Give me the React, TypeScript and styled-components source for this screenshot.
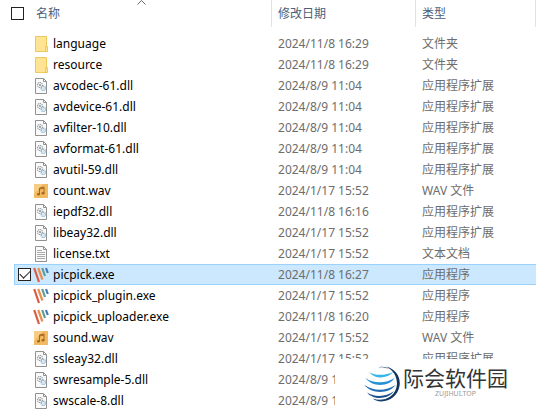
import React from "react";
import styled, { createGlobalStyle, css } from "styled-components";

const GlobalStyle = createGlobalStyle`
  * { box-sizing: border-box; }
  body {
    margin: 0;
    overflow: hidden;
    background: #fff;
    font-family: "Noto Sans", "Noto Sans CJK SC", sans-serif;
    font-size: 12px;
  }
`;

const Explorer = styled.main`
  position: relative;
  height: 100vh;
  overflow: hidden;
`;

const FileTable = styled.table`
  width: 100%;
  border-collapse: separate;
  border-spacing: 0;
  table-layout: fixed;
`;

const Col = styled.col<{ $width?: number }>`
  ${(p) => p.$width && css`width: ${p.$width}px;`}
`;

const HeadCell = styled.th`
  position: relative;
  height: 33px;
  padding: 0;
  vertical-align: top;
  font-weight: 400;
  text-align: left;
`;

const HeadInner = styled.div<{ $lead?: boolean }>`
  display: flex;
  align-items: center;
  gap: 12px;
  height: 27px;
  padding-left: ${(p) => (p.$lead ? 11 : 6)}px;
  border-right: 1px solid #e2e2e2;
`;

const HeadButton = styled.button`
  padding: 0;
  border: 0;
  background: none;
  color: #4c607a;
  font: inherit;
  line-height: 20px;
`;

const SortMark = styled.svg`
  position: absolute;
  top: 0;
  left: 137px;
  width: 9px;
  height: 5px;
`;

const CheckBox = styled.input`
  flex: none;
  appearance: none;
  display: grid;
  place-items: center;
  width: 13px;
  height: 13px;
  margin: 0;
  border: 1px solid #222;
  background: #fff;

  &:checked::after {
    content: "";
    width: 9px;
    height: 5px;
    margin-bottom: 3px;
    border: solid #222;
    border-width: 0 0 1px 1px;
    transform: rotate(-45deg);
  }
`;

const Row = styled.tr<{ $selected: boolean }>`
  ${(p) =>
    p.$selected &&
    css`
      td:not(:first-child) {
        background: #cce8ff;
        border-top: 1px solid #99d1ff;
        border-bottom: 1px solid #99d1ff;
      }
      td:nth-child(2) {
        border-left: 1px solid #99d1ff;
      }
    `}
`;

const Cell = styled.td`
  height: 21px;
  padding: 0 0 0 6px;
  color: #6d6d6d;
  line-height: 19px;
  white-space: nowrap;
`;

const NameCell = styled(Cell)<{ $selected: boolean }>`
  padding-left: ${(p) => (p.$selected ? 3 : 19)}px;
`;

const NameLabel = styled.label`
  display: flex;
  align-items: center;
  gap: 2px;
  color: #000;
`;

const FileName = styled.span`
  padding-left: 2px;
`;

const Icon = styled.svg`
  flex: none;
  width: 16px;
  height: 16px;
`;

const Watermark = styled.aside`
  position: absolute;
  right: 0;
  bottom: 0;
  display: flex;
  align-items: flex-start;
  gap: 2px;
  width: 201px;
  height: 50px;
  padding: 7px 0 0 29px;
  background: #fff;
`;

const Globe = styled.svg`
  width: 37px;
  height: 36px;
`;

const Brand = styled.div`
  display: flex;
  flex-direction: column;
  align-items: center;
`;

const BrandName = styled.strong`
  color: #333;
  font-size: 21px;
  font-weight: 400;
  line-height: 24px;
`;

const BrandSite = styled.small`
  color: #999;
  font-size: 7px;
  line-height: 8px;
`;

type Kind = "folder" | "dll" | "wav" | "txt" | "exe";

const FileIcon = ({ kind }: { kind: Kind }) => {
  if (kind === "folder")
    return (
      <Icon viewBox="0 0 16 16" aria-hidden="true">
        <path d="M2 .5h11.5v10h1.5v5H2z" fill="#ffe494" />
        <path d="M2.500.500h11v10M2.500.500v15h12v-5h-2v5" fill="none" stroke="#edc95d" />
      </Icon>
    );
  if (kind === "wav")
    return (
      <Icon viewBox="0 0 16 16" aria-hidden="true">
        <path d="M1 1h14v14H1z" fill="#f0b962" />
        <path d="M1 1h9L1 11z" fill="#f7cd86" />
        <path d="M6.500 11V5l4.500-1v6M6.500 6l4.500-1" fill="none" stroke="#a8661c" />
        <ellipse cx="5.500" cy="11.200" rx="1.500" ry="1.200" fill="#a8661c" />
        <ellipse cx="10" cy="10.200" rx="1.500" ry="1.200" fill="#a8661c" />
      </Icon>
    );
  if (kind === "exe")
    return (
      <Icon viewBox="0 0 16 16" aria-hidden="true" fill="none" strokeWidth="2.200">
        <path d="M1.200 1 6 15" stroke="#d95b43" />
        <path d="M5.200 1 9.400 12.500" stroke="#e8904e" />
        <path d="M9.200 1 12 9" stroke="#5d9c95" />
        <path d="M13 1 14.800 6" stroke="#4779b8" />
      </Icon>
    );
  return (
    <Icon viewBox="0 0 16 16" aria-hidden="true" fill="none">
      <path d="M2.500.500h8l3 3v12h-11z" fill="#fafafa" stroke="#919191" />
      <path d="M10.500.500v3h3" stroke="#919191" />
      {kind === "txt" ? (
        <path d="M4 4.500h5M4 6.500h8M4 8.500h8M4 10.500h8M4 12.500h8" stroke="#aaa" />
      ) : (
        <>
          <circle cx="7" cy="7" r="2.500" stroke="#969da2" strokeWidth="1.200" strokeDasharray="1.300 .6" />
          <circle cx="7" cy="7" r="1" fill="#8b9195" />
          <circle cx="10.300" cy="10.300" r="2.100" stroke="#8fbddb" strokeWidth="1.400" strokeDasharray="1.300 .4" />
          <circle cx="10.300" cy="10.300" r=".8" fill="#b9d8ea" />
        </>
      )}
    </Icon>
  );
};

const kindNames: Record<Kind, string> = {
  folder: "文件夹",
  dll: "应用程序扩展",
  wav: "WAV 文件",
  txt: "文本文档",
  exe: "应用程序",
};

type FileEntry = { name: string; date: string; kind: Kind; selected?: boolean; untyped?: boolean };

const files: FileEntry[] = [
  { name: "language", date: "2024/11/8 16:29", kind: "folder" },
  { name: "resource", date: "2024/11/8 16:29", kind: "folder" },
  { name: "avcodec-61.dll", date: "2024/8/9 11:04", kind: "dll" },
  { name: "avdevice-61.dll", date: "2024/8/9 11:04", kind: "dll" },
  { name: "avfilter-10.dll", date: "2024/8/9 11:04", kind: "dll" },
  { name: "avformat-61.dll", date: "2024/8/9 11:04", kind: "dll" },
  { name: "avutil-59.dll", date: "2024/8/9 11:04", kind: "dll" },
  { name: "count.wav", date: "2024/1/17 15:52", kind: "wav" },
  { name: "iepdf32.dll", date: "2024/11/8 16:16", kind: "dll" },
  { name: "libeay32.dll", date: "2024/1/17 15:52", kind: "dll" },
  { name: "license.txt", date: "2024/1/17 15:52", kind: "txt" },
  { name: "picpick.exe", date: "2024/11/8 16:27", kind: "exe", selected: true },
  { name: "picpick_plugin.exe", date: "2024/1/17 15:52", kind: "exe" },
  { name: "picpick_uploader.exe", date: "2024/11/8 16:20", kind: "exe" },
  { name: "sound.wav", date: "2024/1/17 15:52", kind: "wav" },
  { name: "ssleay32.dll", date: "2024/1/17 15:52", kind: "dll" },
  { name: "swresample-5.dll", date: "2024/8/9 11:04", kind: "dll", untyped: true },
  { name: "swscale-8.dll", date: "2024/8/9 11:04", kind: "dll", untyped: true },
];

export default function App() {
  return (
    <Explorer>
      <GlobalStyle />
      <FileTable>
        <colgroup>
          <Col $width={14} />
          <Col $width={258} />
          <Col $width={144} />
          <Col />
        </colgroup>
        <thead>
          <tr>
            <HeadCell colSpan={2}>
              <HeadInner $lead>
                <CheckBox type="checkbox" aria-label="全选" />
                <HeadButton type="button">名称</HeadButton>
              </HeadInner>
              <SortMark viewBox="0 0 9 5" aria-hidden="true">
                <path d="M.5 4.500 4.500.500l4 4" fill="none" stroke="#666" />
              </SortMark>
            </HeadCell>
            <HeadCell>
              <HeadInner>
                <HeadButton type="button">修改日期</HeadButton>
              </HeadInner>
            </HeadCell>
            <HeadCell>
              <HeadInner>
                <HeadButton type="button">类型</HeadButton>
              </HeadInner>
            </HeadCell>
          </tr>
        </thead>
        <tbody>
          {files.map(({ name, date, kind, selected = false, untyped }) => (
            <Row key={name} $selected={selected}>
              <Cell />
              <NameCell $selected={selected}>
                <NameLabel>
                  {selected && <CheckBox type="checkbox" defaultChecked />}
                  <FileIcon kind={kind} />
                  <FileName>{name}</FileName>
                </NameLabel>
              </NameCell>
              <Cell>{date}</Cell>
              <Cell>{untyped ? null : kindNames[kind]}</Cell>
            </Row>
          ))}
        </tbody>
      </FileTable>
      <Watermark>
        <Globe viewBox="0 0 37 36" aria-hidden="true">
          <path d="M22 .5C32 3 37 11 35.500 20 33.500 31 24 37 13 35 24 34.500 32.500 28 33 18 33 10 29 4 22 .5z" fill="#12345c" />
          <path d="M13 1.500C17 0 22 .5 25 3c-3-1.500-8-2-12-1.500z" fill="#1b4673" />
          <path d="M5 6c6 4 17 3.500 24 0-5 6-17 8.500-24 0z" fill="#35b5ea" />
          <path d="M1.500 12c8 6 21 5.500 29 0-5 8.500-22 10-29 0z" fill="#2792d4" />
          <path d="M.5 19c9 6.500 22 6 31 0-6 9-24 9.500-31 0z" fill="#1f6db5" />
          <path d="M3 26.500c8 5 19 4.500 27-1.500-5 8.500-21 9.500-27 1.500z" fill="#1a5290" />
          <path d="M9 32.500c5 2 11 1.500 16-1-4 4-12 5-16 1z" fill="#163f70" />
        </Globe>
        <Brand>
          <BrandName>际会软件园</BrandName>
          <BrandSite>ZUJIHUI.TOP</BrandSite>
        </Brand>
      </Watermark>
    </Explorer>
  );
}
